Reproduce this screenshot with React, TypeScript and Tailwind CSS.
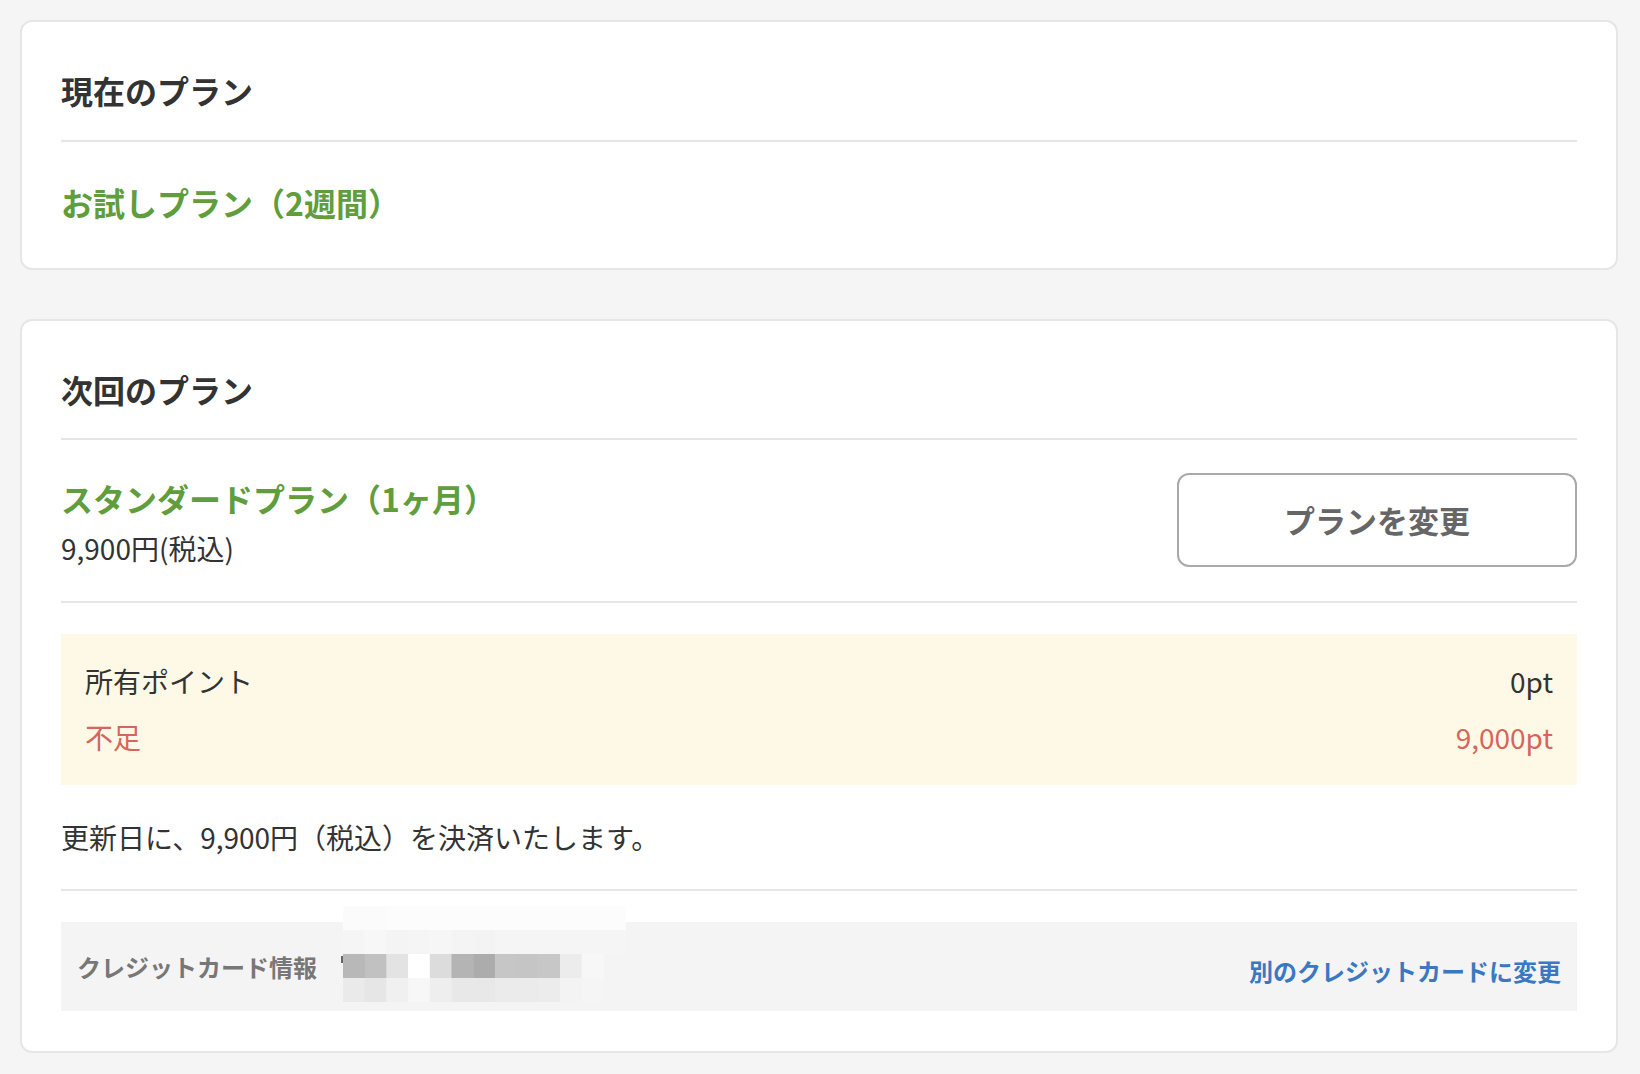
const font = "font-['Noto_Sans_CJK_JP','Noto_Sans',sans-serif]";

// pixelated redaction over the card number
const mosaicTop = ["#fbfbfb", "#fbfbfb", "#fcfcfc", "#fcfcfc", "#fcfcfc", "#fcfcfc", "#fcfcfc", "#fcfcfc", "#fcfcfc", "#fcfcfc", "#fcfcfc", "#fcfcfc", "#fcfcfc"];
const mosaicMid = ["#f5f5f5", "#f7f7f7", "#f4f4f4", "#f5f5f5", "#f6f6f6", "#f4f4f4", "#f3f3f3", "#f5f5f5", "#f5f5f5", "#f5f5f5", "#f5f5f5", "#f5f5f5", "#f5f5f5"];
const mosaicDark = ["#b8b8b8", "#c1c1c1", "#e3e3e3", "#ffffff", "#dcdcdc", "#b4b4b4", "#acacac", "#c6c6c6", "#c5c5c5", "#c7c7c7", "#ececec", "#f7f7f7"];
const mosaicLow = ["#eaeaea", "#e6e6e6", "#f0f0f0", "#f7f7f7", "#eeeeee", "#e8e8e8", "#e8e8e8", "#ebebeb", "#ebebeb", "#ececec", "#f3f3f3", "#f5f5f5"];

function Mosaic() {
  const w = 21.7;
  return (
    <svg width="286" height="98" viewBox="0 0 286 98" className="absolute left-[280px] top-[-16px]">
      {mosaicTop.map((c, i) => (
        <rect key={"a" + i} x={2 + i * w} y={0} width={w + 0.5} height={24} fill={c} />
      ))}
      {mosaicMid.map((c, i) => (
        <rect key={"b" + i} x={2 + i * w} y={24} width={w + 0.5} height={24} fill={c} />
      ))}
      {mosaicDark.map((c, i) => (
        <rect key={"c" + i} x={2 + i * w} y={48} width={w + 0.5} height={24} fill={c} />
      ))}
      {mosaicLow.map((c, i) => (
        <rect key={"d" + i} x={2 + i * w} y={72} width={w + 0.5} height={24} fill={c} />
      ))}
      <rect x={0} y={50} width={2} height={7} fill="#666" />
    </svg>
  );
}

function Card({ title, children }: { title: string; children: React.ReactNode }) {
  return (
    <section className="bg-white border-2 border-[#e6e6e6] rounded-[12px] px-[39px] pt-[45px] pb-[40px]">
      <h2 className="text-[32px] leading-[46px] font-bold text-[#333] pb-[26px] border-b-2 border-[#e6e6e6]">
        {title}
      </h2>
      {children}
    </section>
  );
}

export default function App() {
  return (
    <div className={`min-h-[1074px] bg-[#f5f5f5] pl-[20px] pr-[22px] pt-[20px] pb-[23px] ${font}`}>
      <div className="flex flex-col gap-[49px]">
        <section className="bg-white border-2 border-[#e6e6e6] rounded-[12px] px-[39px] pt-[45px] pb-[43px]">
          <h2 className="text-[32px] leading-[46px] font-bold text-[#333] pb-[27px] border-b-2 border-[#e6e6e6]">
            現在のプラン
          </h2>
          <p className="mt-[37px] text-[32px] leading-[46px] font-bold text-[#5f9d3d]">
            お試しプラン（2週間）
          </p>
        </section>

        <Card title="次回のプラン">
          <div className="flex items-start justify-between pt-[33px] pb-[32px] border-b-2 border-[#e6e6e6]">
            <div className="pt-[2px]">
              <p className="text-[32px] leading-[46px] font-bold text-[#5f9d3d]">
                スタンダードプラン（1ヶ月）
              </p>
              <p className="mt-[6px] text-[28px] leading-[42px] text-[#333]">9,900円(税込)</p>
            </div>
            <button className="w-[400px] h-[94px] border-2 border-[#a9a9a9] rounded-[12px] bg-white text-[31px] font-bold text-[#666]">
              プランを変更
            </button>
          </div>

          <div className="mt-[31px] bg-[#fdf9e6] px-[24px] pt-[26px] pb-[27px] flex flex-col gap-[14px] text-[28px] leading-[42px]">
            <div className="flex justify-between text-[#333]">
              <span>所有ポイント</span>
              <span>0pt</span>
            </div>
            <div className="flex justify-between text-[#d6665b]">
              <span>不足</span>
              <span>9,000pt</span>
            </div>
          </div>

          <p className="mt-[31px] pb-[31px] text-[28px] leading-[42px] text-[#333] border-b-2 border-[#e6e6e6]">
            更新日に、9,900円（税込）を決済いたします。
          </p>

          <div className="relative mt-[31px] h-[89px] bg-[#f4f4f4] px-[16px] flex items-center justify-between">
            <span className="text-[24px] leading-[36px] font-bold text-[#777]">クレジットカード情報</span>
            <Mosaic />
            <a className="pt-[8px] text-[24px] leading-[36px] font-bold text-[#3b78c2]">
              別のクレジットカードに変更
            </a>
          </div>
        </Card>
      </div>
    </div>
  );
}
